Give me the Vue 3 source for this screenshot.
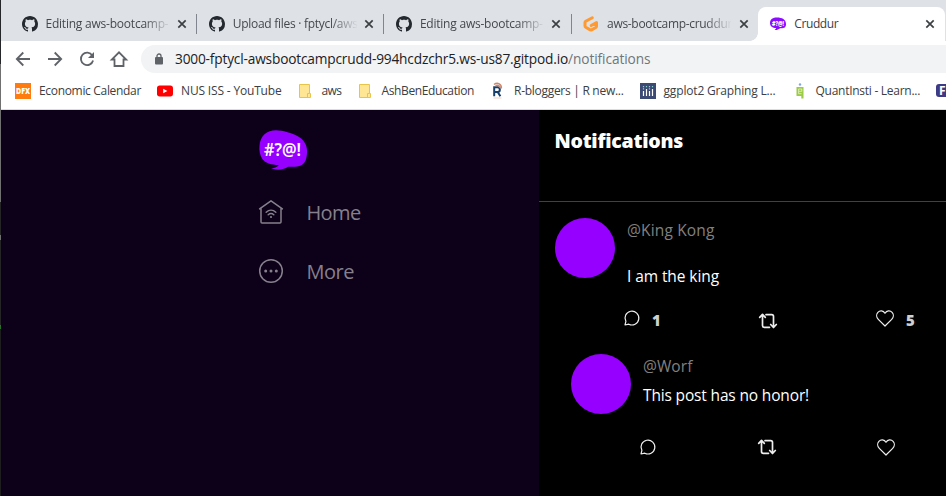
<script setup>
const tabs = [
  { icon: 'github', title: 'Editing aws-bootcamp-', width: 123 },
  { icon: 'github', title: 'Upload files · fptycl/aws', width: 125 },
  { icon: 'github', title: 'Editing aws-bootcamp-', width: 123 },
  { icon: 'gitpod', title: 'aws-bootcamp-cruddur', width: 125 },
  { icon: 'cruddur', title: 'Cruddur', width: 44, active: true },
]

const bookmarks = [
  { icon: 'dfx', title: 'Economic Calendar', width: 102 },
  { icon: 'youtube', title: 'NUS ISS - YouTube', width: 100.5 },
  { icon: 'folder', title: 'aws', width: 20 },
  { icon: 'folder', title: 'AshBenEducation', width: 92.5 },
  { icon: 'rblog', title: 'R-bloggers | R new...', width: 109.5 },
  { icon: 'plotly', title: 'ggplot2 Graphing L...', width: 112 },
  { icon: 'quant', title: 'QuantInsti - Learn...', width: 104.5 },
  { icon: 'f', title: '', width: 0 },
]

const posts = [
  { handle: '@King Kong', hw: 87.5, message: 'I am the king', mw: 92, replies: 1, likes: 5 },
  { handle: '@Worf', hw: 49.5, message: 'This post has no honor!', mw: 166, reply: true },
]

// Tracks a label in or out so that it spans the given number of pixels.
const vFit = {
  mounted(el, { value }) {
    if (!value) return
    const natural = el.getBoundingClientRect().width
    el.style.letterSpacing = `${(value - natural) / el.textContent.length}px`
  },
}
</script>

<template>
  <div class="window">
    <header class="tabstrip">
      <div v-for="(t, i) in tabs" :key="i" class="tab" :class="{ active: t.active, last: i === 3 }">
        <svg v-if="t.icon === 'github'" class="fav" viewBox="0 0 16 16">
          <path fill="#24292f" d="M8 0C3.58 0 0 3.58 0 8c0 3.54 2.29 6.53 5.47 7.59.4.07.55-.17.55-.38 0-.19-.01-.82-.01-1.49-2.01.37-2.53-.49-2.69-.94-.09-.23-.48-.94-.82-1.13-.28-.15-.68-.52-.01-.53.63-.01 1.08.58 1.23.82.72 1.21 1.87.87 2.33.66.07-.52.28-.87.51-1.07-1.78-.2-3.64-.89-3.64-3.95 0-.87.31-1.59.82-2.15-.08-.2-.36-1.02.08-2.12 0 0 .67-.21 2.2.82.64-.18 1.32-.27 2-.27s1.36.09 2 .27c1.53-1.04 2.2-.82 2.2-.82.44 1.1.16 1.92.08 2.12.51.56.82 1.27.82 2.15 0 3.07-1.87 3.75-3.65 3.95.29.25.54.73.54 1.48 0 1.07-.01 1.93-.01 2.2 0 .21.15.46.55.38A8.01 8.01 0 0 0 16 8c0-4.42-3.58-8-8-8z" />
        </svg>
        <svg v-else-if="t.icon === 'gitpod'" class="fav" viewBox="0 0 16 16">
          <path fill="none" stroke="#ff9a32" stroke-width="3" stroke-linejoin="round" stroke-linecap="round" d="M9.300 1.700 2.700 5.300Q2 5.700 2 6.500v3.600q0 .8.7 1.200l4.500 2.600q.7.4 1.400 0l4.200-2.400q.7-.4.7-1.200V6.600L8.200 9.500" />
        </svg>
        <svg v-else class="fav" viewBox="0 0 16 16">
          <path fill="#8c0cff" d="M7 1.500c5 0 9 2 9 6.500 0 3.700-2 4.500-6 4.300-1.500 1.500-3.500 2-5.500 1.700.9-.5 1.400-1 1.600-1.900C2.500 12 0 10.300 0 7c0-3.800 3-5.500 7-5.500z" />
          <text x="2" y="10" class="mini-logo" textLength="12" lengthAdjust="spacingAndGlyphs">#?@!</text>
        </svg>
        <div class="tab-title"><span v-fit="t.width">{{ t.title }}</span></div>
        <svg class="close" viewBox="0 0 10 10"><path d="M1.300 1.300l7.400 7.400M8.700 1.300L1.300 8.700" /></svg>
      </div>
    </header>

    <div class="toolbar">
      <svg class="tool" viewBox="0 0 16 16"><path d="M15 8H2M8.300 1.500L1.800 8l6.500 6.500" /></svg>
      <svg class="tool" viewBox="0 0 16 16"><path d="M1 8h13M7.700 1.500L14.200 8l-6.500 6.500" /></svg>
      <svg class="tool" viewBox="0 0 16 16"><path d="M13.300 4.500A6.200 6.200 0 1 0 14.100 9.500" /><path class="solid" d="M15 1v6H9z" /></svg>
      <svg class="tool" viewBox="0 0 16 16"><path d="M.8 8.500H3.500V15h9V8.500h2.700L8 1.300z" /></svg>
      <div class="omnibox">
        <svg class="lock" viewBox="0 0 8 12"><path fill="none" stroke="#5f6368" stroke-width="1.300" d="M2 5V3a2 2 0 0 1 4 0v2" /><rect y="4" width="8" height="7.500" rx="1" fill="#5f6368" /></svg>
        <span v-fit="393" class="host">3000-fptycl-awsbootcampcrudd-994hcdzchr5.ws-us87.gitpod.io</span><span v-fit="82.5" class="path">/notifications</span>
      </div>
    </div>

    <nav class="bookmarks">
      <div v-for="(b, i) in bookmarks" :key="i" class="bookmark">
        <svg v-if="b.icon === 'dfx'" class="fav" viewBox="0 0 16 16"><rect width="16" height="16" fill="#ff7a0f" /><text x="1" y="11" class="dfx" textLength="14" lengthAdjust="spacingAndGlyphs">DFX</text></svg>
        <svg v-else-if="b.icon === 'youtube'" class="fav" viewBox="0 0 16 16"><rect y="2.500" width="16" height="11" rx="2.700" fill="#f00" /><path fill="#fff" d="M6.200 5.700v4.600l4.200-2.300z" /></svg>
        <svg v-else-if="b.icon === 'folder'" class="fav" viewBox="0 0 16 16"><path fill="#ffe694" stroke="#e8c54a" d="M1.500 1.500h10v9h1v4h-11z" /><path fill="none" stroke="#e8c54a" d="M9.500 14v-3.500h2" /></svg>
        <svg v-else-if="b.icon === 'rblog'" class="fav" viewBox="0 0 16 16"><path d="M4.200 13.300V4.300H7.500a2.200 2.200 0 0 1 0 4.700H4.500M7.700 9l2.700 4.300" fill="none" stroke="#173f6b" stroke-width="2" /><path d="M4 1.500C7.500-1 12 1 11.300 5.500M5.500 2.700c2.500-1 4 0 4.500 2" fill="none" stroke="#cf866a" stroke-width="1.500" /><path d="M3.500 15h8" stroke="#e8c8bc" stroke-width=".8" /></svg>
        <svg v-else-if="b.icon === 'plotly'" class="fav" viewBox="0 0 16 16"><rect width="16" height="16" fill="#3d4a73" /><path d="M3.500 8v5M6.500 6v7M9.500 8v5M12.500 6v7" stroke="#fff" stroke-width="1.200" /><path d="M3.500 3v1.200m0 1v1.200M6.500 3v1.200M9.500 3v1.200m0 1v1.200M12.500 3v1.200" stroke="#8cd3d0" stroke-width="1.200" /></svg>
        <svg v-else-if="b.icon === 'quant'" class="fav" viewBox="0 0 16 16"><circle cx="8" cy="1.500" r="1.200" fill="#82a8d8" /><path d="M4.500 4h7v11.500H9.300v-2.500H4.500z" fill="#9ccb45" /><path d="M9.800 6H6.600v4.700h3M7 8.300h2.800V6" fill="none" stroke="#fff" stroke-opacity=".85" stroke-width=".7" /></svg>
        <svg v-else class="fav" viewBox="0 0 16 16"><rect width="16" height="13" y="1" rx="3" fill="#3e3b86" /><text x="3" y="12" class="f-text">F</text></svg>
        <span v-fit="b.width">{{ b.title }}</span>
      </div>
    </nav>

    <main class="page">
      <aside class="sidebar">
        <svg class="logo" viewBox="0 0 48 40">
          <path fill="#9500ff" d="M17 .3C24 .3 35 3.500 41.500 8c5 4 7 9 6.500 15-.5 8-3 13-10 13.500-3 .3-6 0-9 .3-4 2.700-10 4-17 1.500 3-.3 6-1 8-3.300C12 35 6 33 3 28.500 1 25 0 21 .5 16 1 6 8 .3 17 .3z" />
          <text x="5" y="25.500" class="logo-text" textLength="37" lengthAdjust="spacingAndGlyphs">#?@!</text>
        </svg>
        <a class="nav-link">
          <svg viewBox="0 0 24 24"><path d="M.6 8.900 12 .8l11.400 8.100M2 8v14q0 1 1 1h18q1 0 1-1V8" /><path d="M7.200 12.200c2.800-2.600 6.800-2.600 9.600 0M9.200 14.700c1.700-1.500 3.900-1.500 5.600 0" /><circle cx="12" cy="17" r="1.100" class="dot" /></svg>
          <span v-fit="54">Home</span>
        </a>
        <a class="nav-link">
          <svg viewBox="0 0 24 24"><circle cx="12" cy="12" r="11.300" /><g class="dot"><circle cx="6.700" cy="12" r="1.500" /><circle cx="12" cy="12" r="1.500" /><circle cx="17.300" cy="12" r="1.500" /></g></svg>
          <span v-fit="47.5">More</span>
        </a>
      </aside>

      <section class="feed">
        <div class="feed-head"><span v-fit="128.5">Notifications</span></div>
        <article v-for="p in posts" :key="p.handle" class="post" :class="{ reply: p.reply }">
          <div class="post-main">
            <div class="avatar"></div>
            <div class="post-text">
              <div class="handle"><span v-fit="p.hw">{{ p.handle }}</span></div>
              <div class="message"><span v-fit="p.mw">{{ p.message }}</span></div>
            </div>
          </div>
          <div class="actions">
            <div class="action comment">
              <svg viewBox="0 0 16 16"><path d="M1 15l.9-3.600A6.900 6.900 0 1 1 4.800 14.200z" /></svg>
              <b v-if="p.replies">{{ p.replies }}</b>
            </div>
            <div class="action repost">
              <svg viewBox="0 0 18 16"><path d="M.7 4.300 3.500 1.300l2.800 3M3.500 1.700V12.500q0 1.800 1.800 1.800H10.500M7 1.700h5.700q1.800 0 1.800 1.800V14M11.700 11.500l2.800 3 2.800-3" /></svg>
            </div>
            <div class="action like">
              <svg viewBox="0 0 18 17"><path d="M9 16 2.300 9.300C.2 7.200.2 4.200 1.900 2.300 3.900.2 7.300.4 9 3.300c1.700-2.900 5.100-3.100 7.100-1 1.700 1.900 1.700 4.900-.4 7z" /></svg>
              <b v-if="p.likes">{{ p.likes }}</b>
            </div>
          </div>
        </article>
      </section>
    </main>
  </div>
</template>

<style>
body { margin: 0; overflow: hidden; }
</style>

<style scoped>
* { box-sizing: border-box; }
svg { display: block; flex: none; overflow: visible; }
span { white-space: nowrap; }

.window {
  width: 946px;
  height: 496px;
  padding-left: 1px;
  display: flex;
  flex-direction: column;
  overflow: hidden;
  font-family: "Open Sans", "Noto Sans", sans-serif;
  background: linear-gradient(#25262a 0 64px, #707070 64px 184px, #707070 202px, #252525 202px 235px, #707070 235px 240px, #252525 240px 325px, #287028 325px 329px, #1e1e1e 329px);
}

.tabstrip { height: 41px; flex: none; display: flex; padding: 7px 0 0 8px; background: #dee1e6; }
.tab { position: relative; width: 187.200px; height: 34px; flex: none; display: flex; align-items: center; padding-left: 12.500px; }
.tab::after { content: ""; position: absolute; right: -1px; top: 7px; width: 1px; height: 20px; background: #80868b; }
.tab.active::after, .tab.last::after { display: none; }
.tab.active { background: #fff; border-radius: 8px 8px 0 0; }
.tab.active::before { content: ""; position: absolute; left: -8px; bottom: 0; width: 8px; height: 8px; background: radial-gradient(circle at 0 0, #dee1e6 7.500px, #fff 8px); }
.tab-title { width: 124px; height: 20px; line-height: 19px; margin-left: 8px; overflow: hidden; white-space: nowrap; font-size: 12px; color: #45494e; mask-image: linear-gradient(90deg, #000 98px, transparent 125px); }
.active .tab-title { mask-image: none; color: #3c4043; }
.fav { width: 16px; height: 16px; }
.close { width: 10px; height: 10px; margin-left: 7.500px; stroke: #3c4043; stroke-width: 1.700; }
.active .close { margin-left: 7px; }
.mini-logo { font: 800 6px "Open Sans"; fill: #fff; }

.toolbar { height: 35px; flex: none; display: flex; align-items: center; gap: 16px; padding: 1px 0 0 14px; background: #fff; }
.tool { width: 16px; height: 16px; fill: none; stroke: #5f6368; stroke-width: 1.800; }
.tool .solid { fill: #5f6368; stroke: none; }
.omnibox { flex: 1; height: 28px; margin: 0 0 0 -2px; display: flex; align-items: center; padding-left: 14px; border-radius: 14px 0 0 14px; background: #f1f3f4; font-size: 13.700px; line-height: 28px; }
.lock { width: 8px; height: 12px; margin-right: 12px; }
.host { color: #202124; }
.path { color: #70757a; }

.bookmarks { height: 34px; flex: none; display: flex; align-items: center; gap: 16px; padding: 0 0 3px 14px; overflow: hidden; background: #fff; border-bottom: 1px solid #dadce0; font-size: 12px; line-height: 20px; color: #3c4043; }
.bookmark { display: flex; align-items: center; gap: 8px; flex: none; }
.bookmark .fav { margin-top: -1px; }
.dfx { font: 800 8px "Open Sans"; fill: #fff; }
.f-text { font: 700 12px "Open Sans"; fill: #fff; }

.page { flex: 1; min-height: 0; display: flex; }
.sidebar { width: 538px; padding: 20px 0 0 258px; background: #0c0119; }
.logo { width: 48px; height: 40px; }
.logo-text { font: 600 17px "Noto Sans", "Open Sans"; fill: #fff; }
.nav-link { display: flex; align-items: center; gap: 24px; height: 24px; margin-top: 35px; font-size: 20px; line-height: 24px; color: #86808c; }
.nav-link span { padding-top: 2px; margin-left: -.5px; }
.logo + .nav-link { margin-top: 30px; }
.nav-link svg { width: 24px; height: 24px; fill: none; stroke: #86808c; stroke-width: 1.500; stroke-linejoin: round; stroke-linecap: round; }
.nav-link .dot { fill: #86808c; stroke: none; }

.feed { flex: 1; background: #000; color: #fff; }
.feed-head { height: 92px; padding: 16px 16px 0 15.500px; border-bottom: 1px solid #404045; font-size: 19.500px; font-weight: 800; line-height: 30px; }
.post { padding: 16px 16px 0; }
.post-main { display: flex; gap: 12px; height: 76px; }
.avatar { width: 60px; height: 60px; flex: none; border-radius: 50%; background: #9500ff; }
.post-text { font-size: 15.500px; line-height: 22px; padding-top: .5px; }
.handle { color: #808080; }
.message { margin-top: 24px; }
.actions { display: flex; height: 44px; padding: 15px 0 0 69px; }
.action { display: flex; flex: none; }
.action svg { fill: none; stroke: #eee; stroke-width: 1.200; stroke-linejoin: round; stroke-linecap: round; }
.comment { width: 135px; }
.comment svg { width: 16px; height: 16px; margin-top: 1px; }
.repost { width: 117px; padding-top: 4px; }
.repost svg { width: 18px; height: 16px; stroke-width: 1.700; }
.like svg { width: 18px; height: 17px; margin-top: .5px; }
.action b { margin-left: 12px; line-height: 22px; font-size: 15px; font-weight: 800; color: #d0d0d0; }
.reply { padding-left: 32px; }
.reply .message { margin-top: 7px; }
.reply .actions { padding-top: 9px; }
.reply .comment { width: 118px; }
.reply .comment svg { margin-top: 0; }
.reply .repost { width: 119px; padding-top: 0; }
.reply .like svg { margin-top: 0; }
</style>
